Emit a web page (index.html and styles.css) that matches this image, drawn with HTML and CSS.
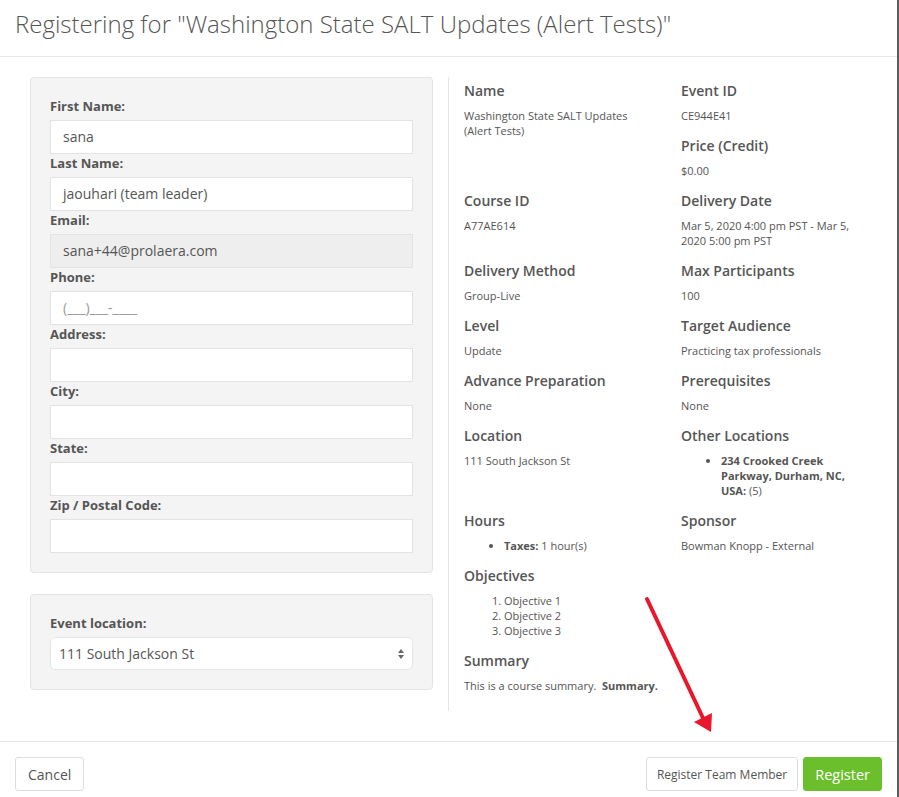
FILE: index.html
```html
<!DOCTYPE html>
<html lang="en">
<head>
  <meta charset="UTF-8">
  <title>Register</title>
  <meta name="viewport" content="width=device-width, initial-scale=1.0">
  <link rel="stylesheet" href="styles.css">
</head>
<body>
  <div class="modal">
    <div class="modal-header">
      <h3>Registering for "Washington State SALT Updates (Alert Tests)"</h3>
    </div>

    <div class="modal-body">
      <div class="col-form">
        <div class="well">
          <label>First Name:</label>
          <div class="input">sana</div>
          <label>Last Name:</label>
          <div class="input">jaouhari (team leader)</div>
          <label>Email:</label>
          <div class="input readonly">sana+44@prolaera.com</div>
          <label>Phone:</label>
          <div class="input mask">(___)___-____</div>
          <label>Address:</label>
          <div class="input"></div>
          <label>City:</label>
          <div class="input"></div>
          <label>State:</label>
          <div class="input"></div>
          <label>Zip / Postal Code:</label>
          <div class="input"></div>
        </div>

        <div class="well">
          <label>Event location:</label>
          <div class="select">
            <span>111 South Jackson St</span>
            <svg width="8" height="12" viewBox="0 0 8 12"><path d="M4 1 L7 5 H1 Z M4 11 L7 7 H1 Z" fill="#666"/></svg>
          </div>
        </div>
      </div>

      <div class="col-info">
        <div class="info-grid">
          <div class="cell">
            <h4>Name</h4>
            <p>Washington State SALT Updates (Alert Tests)</p>
          </div>
          <div class="cell">
            <h4>Event ID</h4>
            <p>CE944E41</p>
            <h4>Price (Credit)</h4>
            <p>$0.00</p>
          </div>

          <div class="cell">
            <h4>Course ID</h4>
            <p>A77AE614</p>
          </div>
          <div class="cell">
            <h4>Delivery Date</h4>
            <p>Mar 5, 2020 4:00 pm PST - Mar 5, 2020 5:00 pm PST</p>
          </div>

          <div class="cell">
            <h4>Delivery Method</h4>
            <p>Group-Live</p>
          </div>
          <div class="cell">
            <h4>Max Participants</h4>
            <p>100</p>
          </div>

          <div class="cell">
            <h4>Level</h4>
            <p>Update</p>
          </div>
          <div class="cell">
            <h4>Target Audience</h4>
            <p>Practicing tax professionals</p>
          </div>

          <div class="cell">
            <h4>Advance Preparation</h4>
            <p>None</p>
          </div>
          <div class="cell">
            <h4>Prerequisites</h4>
            <p>None</p>
          </div>

          <div class="cell">
            <h4>Location</h4>
            <p>111 South Jackson St</p>
          </div>
          <div class="cell">
            <h4>Other Locations</h4>
            <ul>
              <li><strong>234 Crooked Creek Parkway, Durham, NC, USA:</strong> (5)</li>
            </ul>
          </div>

          <div class="cell">
            <h4>Hours</h4>
            <ul>
              <li><strong>Taxes:</strong> 1 hour(s)</li>
            </ul>
          </div>
          <div class="cell">
            <h4>Sponsor</h4>
            <p>Bowman Knopp - External</p>
          </div>

          <div class="cell wide">
            <h4>Objectives</h4>
            <ol>
              <li>Objective 1</li>
              <li>Objective 2</li>
              <li>Objective 3</li>
            </ol>
          </div>

          <div class="cell wide">
            <h4>Summary</h4>
            <p>This is a course summary. &nbsp;<strong>Summary.</strong></p>
          </div>
        </div>
      </div>
    </div>

    <div class="modal-footer">
      <button class="btn">Cancel</button>
      <div class="spacer"></div>
      <button class="btn btn-small">Register Team Member</button>
      <button class="btn btn-success">Register</button>
    </div>

    <!-- annotation arrow -->
    <svg class="arrow" width="899" height="797" viewBox="0 0 899 797">
      <line x1="647" y1="599" x2="703" y2="718" stroke="#e8172b" stroke-width="4" stroke-linecap="round"/>
      <path d="M694 722 L712 713 L711 732 Z" fill="#e8172b"/>
    </svg>
  </div>
</body>
</html>
```

FILE: styles.css
```css
* {
  box-sizing: border-box;
}
body {
  margin: 0;
  font-family: 'Open Sans', 'Liberation Sans', sans-serif;
  color: #555;
  background: #fff;
}
.modal {
  position: relative;
  width: 899px;
  height: 797px;
  border-right: 2px solid #5c5c5c;
  overflow: hidden;
}
.modal-header {
  height: 57px;
  padding: 10px 15px 0;
  border-bottom: 1px solid #e5e5e5;
}
.modal-header h3 {
  margin: 0;
  font-size: 24px;
  font-weight: 300;
  line-height: 28px;
  color: #555;
}
.modal-body {
  display: flex;
  padding: 20px 0 30px 15px;
  height: 684px;
}
.col-form {
  width: 433px;
  padding: 0 15px;
}
.well {
  background: #f4f4f4;
  border: 1px solid #e3e3e3;
  border-radius: 4px;
  padding: 19px 19px 19px;
  margin-bottom: 21px;
}
.well label {
  display: block;
  font-size: 13px;
  font-weight: 700;
  line-height: 18px;
  margin-bottom: 5px;
}
.input {
  height: 34px;
  background: #fff;
  border: 1px solid #e3e3e3;
  padding: 0 12px;
  font-size: 14px;
  line-height: 32px;
  color: #555;
}
.input.readonly {
  background: #eee;
}
.input.mask {
  color: #999;
}
.select {
  display: flex;
  align-items: center;
  justify-content: space-between;
  height: 33px;
  background: #fff;
  border: 1px solid #e6e6e6;
  border-radius: 5px;
  padding: 0 7px 0 8px;
  font-size: 14px;
}
.col-info {
  width: 449px;
  border-left: 1px solid #e5e5e5;
  padding: 0 0 0 15px;
}
.info-grid {
  display: grid;
  grid-template-columns: 217px 201px;
}
.cell {
  padding-right: 24px;
}
.cell.wide {
  grid-column: 1 / 3;
}
.cell h4 {
  margin: 0 0 7px;
  padding-top: 4px;
  font-size: 14px;
  font-weight: 600;
  line-height: 20px;
  color: #555;
}
.cell p,
.cell ul,
.cell ol {
  margin: 0 0 9px;
  font-size: 11px;
  line-height: 15px;
}
.cell ul,
.cell ol {
  padding-left: 40px;
}
.cell strong {
  font-weight: 700;
}
.modal-footer {
  display: flex;
  gap: 5px;
  align-items: flex-start;
  padding: 15px 15px 0;
  border-top: 1px solid #e5e5e5;
  height: 56px;
}
.spacer {
  flex: 1;
}
.btn {
  height: 34px;
  padding: 0 12px;
  background: #fff;
  border: 1px solid #ddd;
  border-radius: 3px;
  font-family: inherit;
  font-size: 14px;
  color: #555;
}
.btn-small {
  font-size: 12px;
  padding: 0 10px;
}
.btn-success {
  background: #6cbf2c;
  border-color: #6cbf2c;
  color: #fff;
  font-size: 14.5px;
  padding: 0 11px;
}
.arrow {
  position: absolute;
  left: 0;
  top: 0;
  pointer-events: none;
}
```
